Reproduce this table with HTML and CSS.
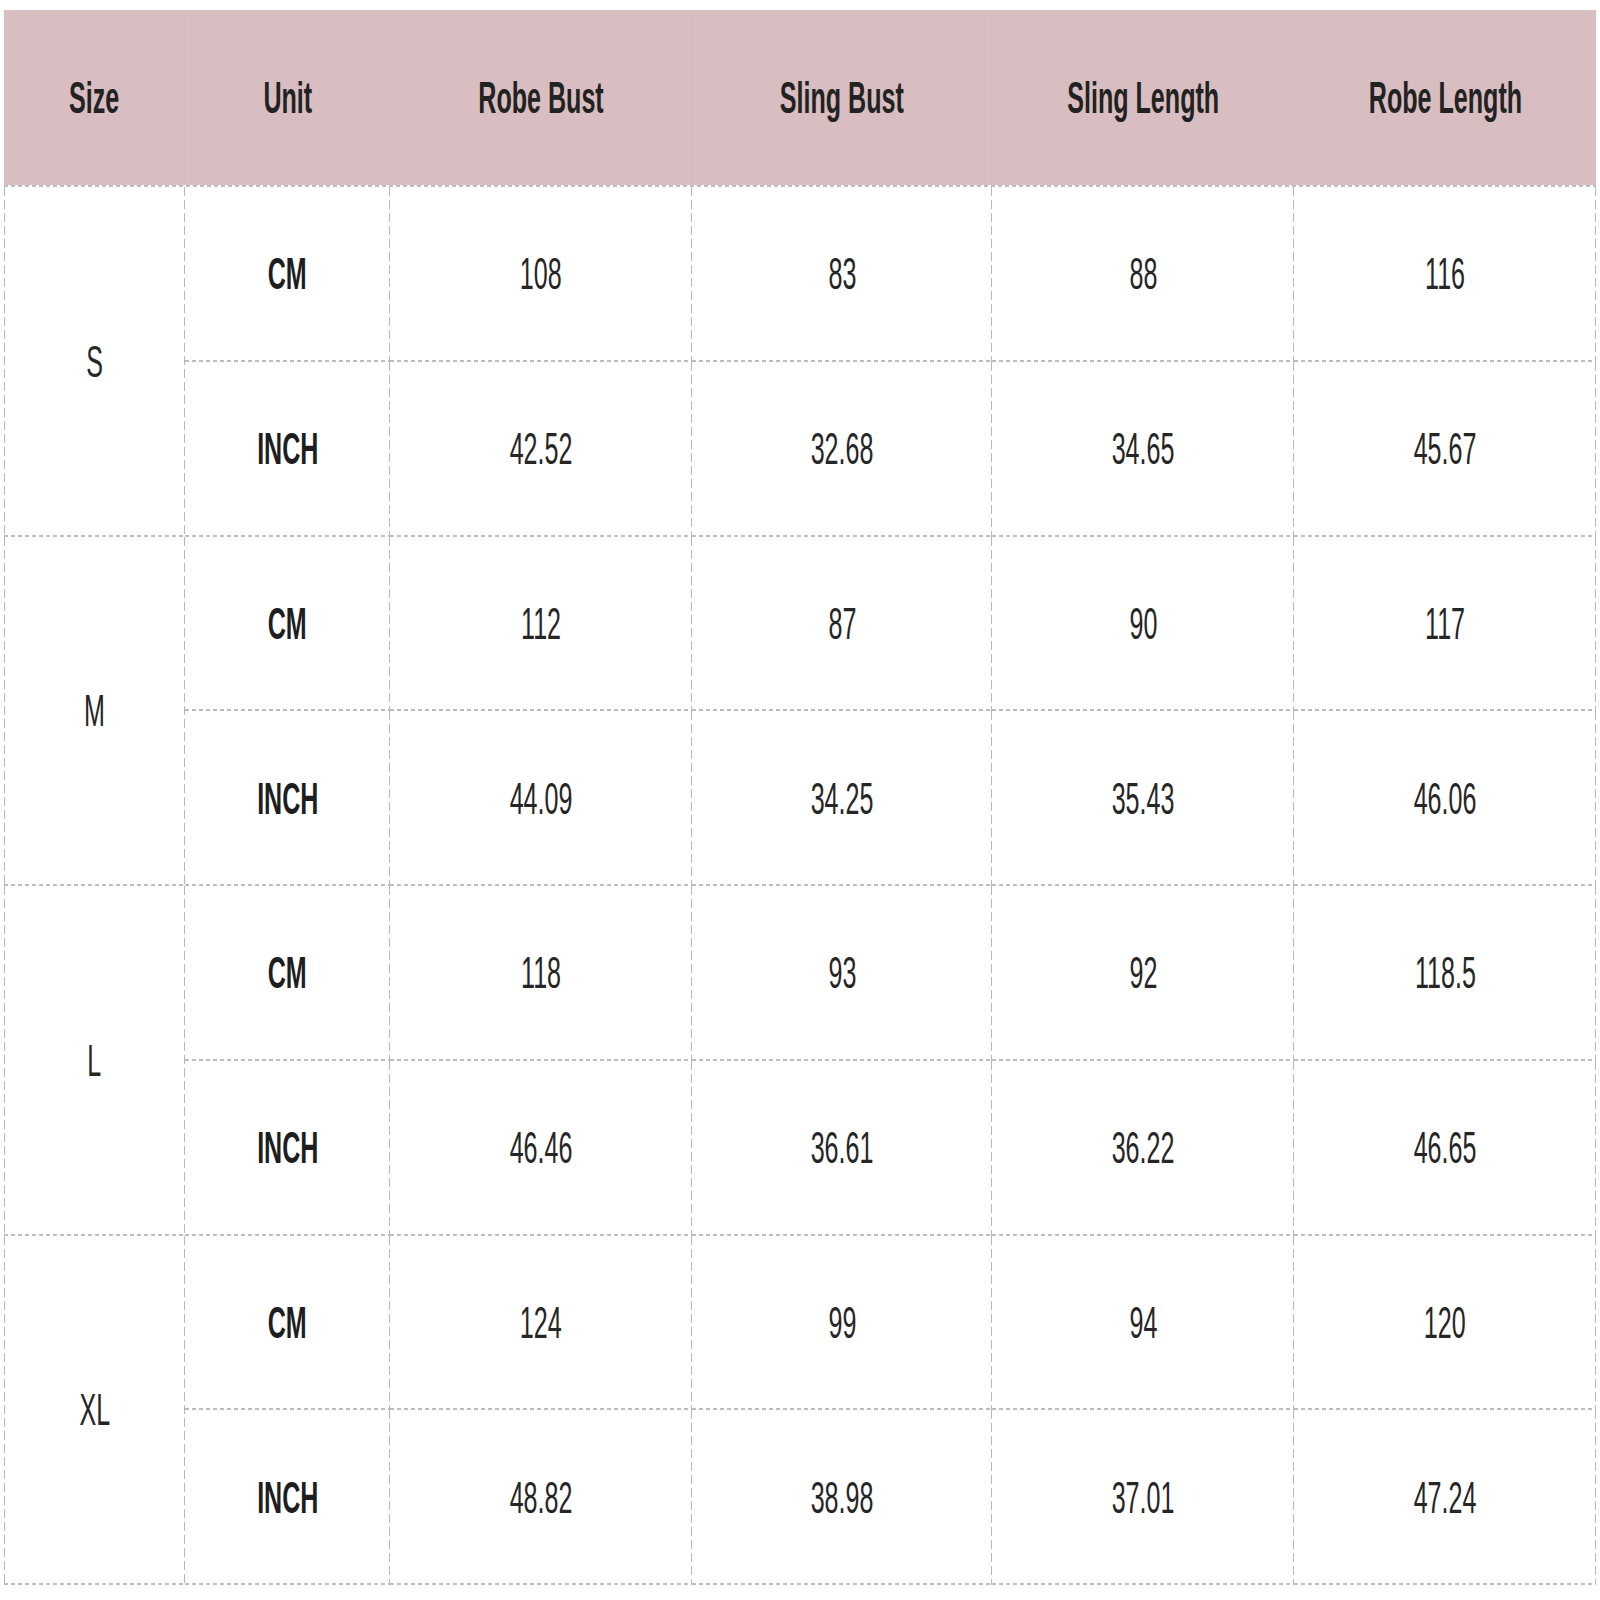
FILE: index.html
```html
<!DOCTYPE html>
<html lang="en">
<head>
<meta charset="utf-8">
<title>Size Chart</title>
<link rel="stylesheet" href="styles.css">
</head>
<body>
<div class="chart">
  <div class="head">
    <div class="hcell c1"><span class="t">Size</span></div>
    <div class="hcell"><span class="t">Unit</span></div>
    <div class="hcell"><span class="t">Robe Bust</span></div>
    <div class="hcell"><span class="t">Sling Bust</span></div>
    <div class="hcell"><span class="t">Sling Length</span></div>
    <div class="hcell"><span class="t">Robe Length</span></div>
  </div>
  <div class="body">
    <div class="cell size c1"><span class="t">S</span></div>
    <div class="cell unit"><span class="t">CM</span></div>
    <div class="cell"><span class="t">108</span></div>
    <div class="cell"><span class="t">83</span></div>
    <div class="cell"><span class="t">88</span></div>
    <div class="cell"><span class="t">116</span></div>
    <div class="cell unit"><span class="t">INCH</span></div>
    <div class="cell"><span class="t">42.52</span></div>
    <div class="cell"><span class="t">32.68</span></div>
    <div class="cell"><span class="t">34.65</span></div>
    <div class="cell"><span class="t">45.67</span></div>

    <div class="cell size c1"><span class="t">M</span></div>
    <div class="cell unit"><span class="t">CM</span></div>
    <div class="cell"><span class="t">112</span></div>
    <div class="cell"><span class="t">87</span></div>
    <div class="cell"><span class="t">90</span></div>
    <div class="cell"><span class="t">117</span></div>
    <div class="cell unit"><span class="t">INCH</span></div>
    <div class="cell"><span class="t">44.09</span></div>
    <div class="cell"><span class="t">34.25</span></div>
    <div class="cell"><span class="t">35.43</span></div>
    <div class="cell"><span class="t">46.06</span></div>

    <div class="cell size c1"><span class="t">L</span></div>
    <div class="cell unit"><span class="t">CM</span></div>
    <div class="cell"><span class="t">118</span></div>
    <div class="cell"><span class="t">93</span></div>
    <div class="cell"><span class="t">92</span></div>
    <div class="cell"><span class="t">118.5</span></div>
    <div class="cell unit"><span class="t">INCH</span></div>
    <div class="cell"><span class="t">46.46</span></div>
    <div class="cell"><span class="t">36.61</span></div>
    <div class="cell"><span class="t">36.22</span></div>
    <div class="cell"><span class="t">46.65</span></div>

    <div class="cell size c1"><span class="t">XL</span></div>
    <div class="cell unit"><span class="t">CM</span></div>
    <div class="cell"><span class="t">124</span></div>
    <div class="cell"><span class="t">99</span></div>
    <div class="cell"><span class="t">94</span></div>
    <div class="cell"><span class="t">120</span></div>
    <div class="cell unit"><span class="t">INCH</span></div>
    <div class="cell"><span class="t">48.82</span></div>
    <div class="cell"><span class="t">38.98</span></div>
    <div class="cell"><span class="t">37.01</span></div>
    <div class="cell"><span class="t">47.24</span></div>
  </div>
</div>
</body>
</html>
```

FILE: styles.css
```css
html, body {
  margin: 0;
  padding: 0;
  background: #ffffff;
}

body {
  font-family: "Liberation Sans", Arial, sans-serif;
  color: #262626;
}

.chart {
  padding: 10px 0 0 4px;
  width: 1592px;
}

.head,
.body {
  display: grid;
  grid-template-columns: 181px 205px 302px 300px 302px 302px;
}

.head {
  background: #d8bec0;
  height: 175px;
}

.hcell {
  display: flex;
  align-items: center;
  justify-content: center;
  font-weight: bold;
  color: #222222;
  background:
    linear-gradient(#d4babd, #d4babd) right top / 1px 100% no-repeat;
}

.hcell:last-child {
  background: none;
}

.body {
  grid-auto-rows: 174.75px;
  padding-top: 2px;
  background:
    repeating-linear-gradient(90deg, #bdbdbd 0 4px, transparent 4px 7px) left top / 100% 2px no-repeat;
}

.cell {
  display: flex;
  align-items: center;
  justify-content: center;
  background:
    repeating-linear-gradient(90deg, #bdbdbd 0 4px, transparent 4px 7px) left bottom / 100% 2px no-repeat,
    repeating-linear-gradient(180deg, #b8b8b8 0 9px, transparent 9px 13px) right top / 1px 100% no-repeat;
}

.cell.c1 {
  background:
    repeating-linear-gradient(90deg, #bdbdbd 0 4px, transparent 4px 7px) left bottom / 100% 2px no-repeat,
    repeating-linear-gradient(180deg, #b8b8b8 0 9px, transparent 9px 13px) right top / 1px 100% no-repeat,
    repeating-linear-gradient(180deg, #b8b8b8 0 9px, transparent 9px 13px) left top / 1px 100% no-repeat;
}

.size {
  grid-row: span 2;
}

.unit {
  font-weight: bold;
  color: #1e1e1e;
}

.t {
  display: inline-block;
  font-size: 44px;
  line-height: 1;
  white-space: nowrap;
  transform: scaleX(0.57);
  transform-origin: center;
}
```
